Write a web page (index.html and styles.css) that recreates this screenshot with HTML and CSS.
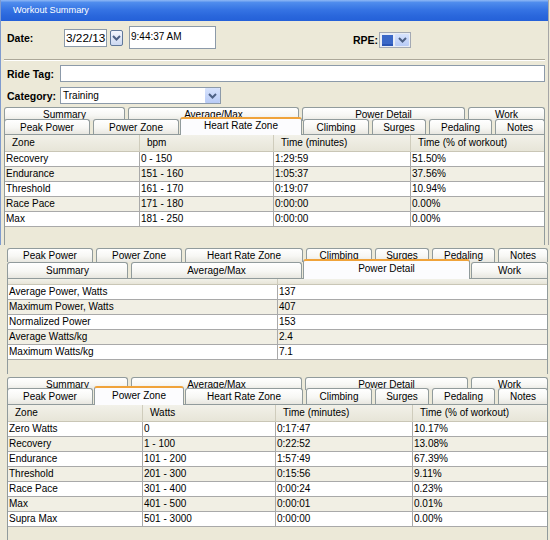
FILE: index.html
```html
<!DOCTYPE html>
<html>
<head>
<meta charset="utf-8">
<link rel="stylesheet" href="styles.css">
</head>
<body>
<div class="win">
  <div class="titlebar">Workout Summary</div>
  <div class="form">
    <div class="daterow">
      <span class="lbl lbl-date">Date:</span>
      <div class="box datebox">3/22/13</div>
      <div class="spin"><svg width="9" height="6" viewBox="0 0 9 6"><path d="M1 1 L4.5 4.5 L8 1" fill="none" stroke="#4d6185" stroke-width="2"/></svg></div>
      <div class="box timebox">9:44:37 AM</div>
      <div class="rpe">
        <span class="lbl">RPE:</span>
        <div class="rpe-combo"><span class="swatch"></span><span class="ddbtn"><svg width="9" height="6" viewBox="0 0 9 6"><path d="M1 1 L4.5 4.5 L8 1" fill="none" stroke="#4d6185" stroke-width="2"/></svg></span></div>
      </div>
    </div>
    <div class="sep"></div>
    <div class="field field-tag"><span class="lbl lbl-field">Ride Tag:</span><div class="box ridetag"></div></div>
    <div class="field field-cat"><span class="lbl lbl-field">Category:</span><div class="box select"><span class="seltext">Training</span><span class="ddbtn selbtn"><svg width="9" height="6" viewBox="0 0 9 6"><path d="M1 1 L4.5 4.5 L8 1" fill="none" stroke="#4d6185" stroke-width="2"/></svg></span></div></div>
  </div>
  <div class="tabpane tp1">
    <div class="tabrow back">
      <div class="tab w-sum">Summary</div>
      <div class="tab w-avg">Average/Max</div>
      <div class="tab w-pd">Power Detail</div>
      <div class="tab w-work">Work</div>
    </div>
    <div class="tabrow front">
      <div class="tab w-peak">Peak Power</div>
      <div class="tab w-pz">Power Zone</div>
      <div class="tab w-hrz sel">Heart Rate Zone</div>
      <div class="tab w-climb">Climbing</div>
      <div class="tab w-surge">Surges</div>
      <div class="tab w-ped">Pedaling</div>
      <div class="tab w-notes">Notes</div>
    </div>
    <div class="content">
      <table class="lv">
        <colgroup><col class="c135"><col class="c134"><col class="c137"><col></colgroup>
        <thead><tr><th>Zone</th><th>bpm</th><th>Time (minutes)</th><th>Time (% of workout)</th></tr></thead>
        <tbody>
          <tr><td>Recovery</td><td>0 - 150</td><td>1:29:59</td><td>51.50%</td></tr>
          <tr><td>Endurance</td><td>151 - 160</td><td>1:05:37</td><td>37.56%</td></tr>
          <tr><td>Threshold</td><td>161 - 170</td><td>0:19:07</td><td>10.94%</td></tr>
          <tr><td>Race Pace</td><td>171 - 180</td><td>0:00:00</td><td>0.00%</td></tr>
          <tr><td>Max</td><td>181 - 250</td><td>0:00:00</td><td>0.00%</td></tr>
        </tbody>
      </table>
    </div>
  </div>
</div>

<div class="tabpane tp2">
  <div class="tabrow back">
    <div class="tab w-peak">Peak Power</div>
    <div class="tab w-pz">Power Zone</div>
    <div class="tab w-hrz">Heart Rate Zone</div>
    <div class="tab w-climb">Climbing</div>
    <div class="tab w-surge">Surges</div>
    <div class="tab w-ped">Pedaling</div>
    <div class="tab w-notes">Notes</div>
  </div>
  <div class="tabrow front">
    <div class="tab w-sum">Summary</div>
    <div class="tab w-avg">Average/Max</div>
    <div class="tab w-pd sel">Power Detail</div>
    <div class="tab w-work">Work</div>
  </div>
  <div class="content">
    <table class="lv">
      <colgroup><col class="c270"><col></colgroup>
      <thead><tr class="thin"><th></th><th></th></tr></thead>
      <tbody>
        <tr><td>Average Power, Watts</td><td>137</td></tr>
        <tr><td>Maximum Power, Watts</td><td>407</td></tr>
        <tr><td>Normalized Power</td><td>153</td></tr>
        <tr><td>Average Watts/kg</td><td>2.4</td></tr>
        <tr><td>Maximum Watts/kg</td><td>7.1</td></tr>
      </tbody>
    </table>
  </div>
</div>

<div class="tabpane tp3">
  <div class="tabrow back">
    <div class="tab w-sum">Summary</div>
    <div class="tab w-avg">Average/Max</div>
    <div class="tab w-pd">Power Detail</div>
    <div class="tab w-work">Work</div>
  </div>
  <div class="tabrow front">
    <div class="tab w-peak">Peak Power</div>
    <div class="tab w-pz sel">Power Zone</div>
    <div class="tab w-hrz">Heart Rate Zone</div>
    <div class="tab w-climb">Climbing</div>
    <div class="tab w-surge">Surges</div>
    <div class="tab w-ped">Pedaling</div>
    <div class="tab w-notes">Notes</div>
  </div>
  <div class="content">
    <table class="lv">
      <colgroup><col class="c135"><col class="c133"><col class="c137"><col></colgroup>
      <thead><tr><th>Zone</th><th>Watts</th><th>Time (minutes)</th><th>Time (% of workout)</th></tr></thead>
      <tbody>
        <tr><td>Zero Watts</td><td>0</td><td>0:17:47</td><td>10.17%</td></tr>
        <tr><td>Recovery</td><td>1 - 100</td><td>0:22:52</td><td>13.08%</td></tr>
        <tr><td>Endurance</td><td>101 - 200</td><td>1:57:49</td><td>67.39%</td></tr>
        <tr><td>Threshold</td><td>201 - 300</td><td>0:15:56</td><td>9.11%</td></tr>
        <tr><td>Race Pace</td><td>301 - 400</td><td>0:00:24</td><td>0.23%</td></tr>
        <tr><td>Max</td><td>401 - 500</td><td>0:00:01</td><td>0.01%</td></tr>
        <tr><td>Supra Max</td><td>501 - 3000</td><td>0:00:00</td><td>0.00%</td></tr>
      </tbody>
    </table>
  </div>
</div>
</body>
</html>
```

FILE: styles.css
```css
* { box-sizing: border-box; }

body {
  margin: 0;
  width: 550px;
  height: 540px;
  overflow: hidden;
  background: #ece9d8;
  font-family: "Liberation Sans", Arial, sans-serif;
  font-size: 10px;
  color: #000;
}

/* ---------- window ---------- */
.win {
  width: 549px;
  border-left: 1px solid #7f9bcf;
  border-right: 1px solid #a6a6a6;
}

.titlebar {
  height: 21px;
  line-height: 21px;
  padding-left: 12px;
  color: #fff;
  font-size: 9.2px;
  background: linear-gradient(#8fb8f5 0%, #4f8ced 12%, #3674e4 45%, #2a67dc 75%, #2460d8 100%);
}

.form {
  padding: 5px 0 0 6px;
}

.lbl {
  font-weight: bold;
  font-size: 10.5px;
  white-space: nowrap;
}

.box {
  background: #fff;
  border: 1px solid #8c9aa9;
}

.daterow {
  display: flex;
  align-items: center;
  height: 23px;
}

.lbl-date { width: 57px; }

.datebox {
  width: 43px;
  height: 18px;
  line-height: 16px;
  font-size: 11.8px;
  padding-left: 1px;
}

.spin {
  width: 13px;
  height: 16px;
  margin-left: 3px;
  border: 1px solid #60789a;
  border-radius: 2px;
  background: linear-gradient(#f3f6fd, #ccd8f1);
  display: flex;
  align-items: center;
  justify-content: center;
}

.timebox {
  width: 87px;
  height: 23px;
  line-height: 19px;
  margin-left: 6px;
  padding-left: 1px;
}

.rpe {
  display: flex;
  align-items: center;
  gap: 1px;
  margin-left: 137px;
  align-self: flex-end;
  margin-bottom: 1px;
}

.rpe-combo {
  width: 32px;
  height: 16px;
  border: 1px solid #a3a9b3;
  background: #e9edf5;
  display: flex;
  align-items: center;
  padding: 1px 1px 1px 2px;
  gap: 2px;
}

.swatch {
  width: 11px;
  height: 11px;
  background: #3b68c7;
  border-bottom: 2px solid #2a55b4;
}

.ddbtn {
  display: flex;
  align-items: center;
  justify-content: center;
  width: 14px;
  height: 12px;
  background: linear-gradient(#d7e3fd, #b8cbf6);
  border-radius: 1px;
}

.sep {
  margin: 10px 0 0 -3px;
  width: 541px;
  height: 2px;
  border-top: 1px solid #aca899;
  border-bottom: 1px solid #fff;
}

.field {
  display: flex;
  align-items: center;
  height: 17px;
}

.field-tag { margin-top: 4px; }
.field-cat { margin-top: 5px; }

.lbl-field { width: 53px; }

.ridetag {
  width: 485px;
  height: 17px;
}

.select {
  width: 161px;
  height: 17px;
  display: flex;
  align-items: center;
  padding: 0 0 0 2px;
}

.seltext { flex: 1; }

.selbtn {
  width: 15px;
  height: 15px;
}

/* ---------- tabs ---------- */
.tabpane {
  width: 541px;
}

.tp1 { margin: 3px 0 0 3px; }
.tp2 { margin-left: 7px; padding-top: 3px; }
.tp3 { margin-left: 7px; padding-top: 3px; }

.tabrow {
  display: flex;
  gap: 3px;
}

.tabrow.front {
  position: relative;
  z-index: 1;
}

.tab {
  flex: 0 0 var(--w);
  border: 1px solid #919b9c;
  border-bottom: none;
  border-radius: 3px 3px 0 0;
  background: linear-gradient(#ffffff 0%, #f7f7f4 55%, #e8e7e0 100%);
  text-align: center;
  white-space: nowrap;
  overflow: hidden;
}

.tab.sel {
  flex-basis: calc(var(--w) + 4px);
  margin-left: -2px;
  margin-right: -2px;
  align-self: flex-start;
  background: #fcfcfe;
  border-top: 2px solid #f0a33a;
  position: relative;
  z-index: 2;
}

.w-sum { --w: 121px; }
.w-avg { --w: 171px; }
.w-pd { --w: 163px; }
.w-work { --w: 77px; }
.w-peak { --w: 86px; }
.w-pz { --w: 86px; }
.w-hrz { --w: 118px; }
.w-climb { --w: 66px; }
.w-surge { --w: 54px; }
.w-ped { --w: 63px; }
.w-notes { --w: 50px; }

/* panel 1 rows */
.tp1 .back { height: 14px; line-height: 13px; }
.tp1 .front { height: 15px; margin-top: -2px; line-height: 15px; }
.tp1 .sel { height: 18px; margin-top: -2px; line-height: 14px; }

/* panel 2 rows */
.tp2 .back { height: 14px; line-height: 14px; }
.tp2 .front { height: 16px; line-height: 15px; }
.tp2 .sel { height: 20px; margin-top: -3px; line-height: 15px; }

/* panel 3 rows */
.tp3 .back { height: 13px; line-height: 13px; }
.tp3 .front { height: 16px; margin-top: -2px; line-height: 16px; }
.tp3 .sel { height: 19px; margin-top: -2px; line-height: 15px; }

/* ---------- list views ---------- */
.content {
  border: 1px solid #919b9c;
  border-bottom: none;
}

.tp1 .content { padding-bottom: 18px; }
.tp2 .content { padding-bottom: 14px; }
.tp3 .content { padding-bottom: 20px; }

.lv {
  width: 100%;
  table-layout: fixed;
  border-collapse: separate;
  border-spacing: 0;
}

.c133 { width: 133px; }
.c134 { width: 134px; }
.c135 { width: 135px; }
.c137 { width: 137px; }
.c270 { width: 270px; }

.lv th {
  font-weight: normal;
  text-align: left;
  padding: 0 0 0 7px;
  line-height: 16px;
  background: linear-gradient(#f2f1e9, #e7e5d8);
  border-bottom: 1px solid #c9c6b6;
  border-right: 1px solid #cfccbc;
  white-space: nowrap;
}

.lv .thin th {
  line-height: 5px;
  height: 6px;
}

.lv td {
  padding: 0 0 0 1px;
  line-height: 14px;
  background: #fff;
  border-bottom: 1px solid #a9a9a9;
  border-right: 1px solid #a9a9a9;
  white-space: nowrap;
  overflow: hidden;
}

.lv td:last-child,
.lv th:last-child { border-right: none; }

.lv tbody tr:nth-child(even) td { background: #f1efe4; }
```
